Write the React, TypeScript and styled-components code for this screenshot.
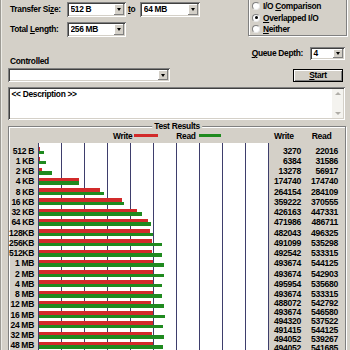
import React from "react";
import styled, { createGlobalStyle } from "styled-components";

const FONT = `"Liberation Sans", Arial, sans-serif`;

const GlobalStyle = createGlobalStyle`
  html, body { margin: 0; padding: 0; background: #d4d0c8; }
  * { box-sizing: border-box; }
`;

const Window = styled.div`
  width: 350px;
  height: 350px;
  overflow: hidden;
  background: #d4d0c8;
  box-shadow: inset 1px 0 #9c9a94, inset 2px 0 #ecebe6;
  font-family: ${FONT};
  font-weight: bold;
  font-size: 8.4px;
  letter-spacing: -0.3px;
  color: #000;
  display: flex;
  flex-direction: column;
`;

const TopArea = styled.div`
  height: 56px;
  display: flex;
  flex-shrink: 0;
`;

const LeftCol = styled.div`
  width: 248px;
  padding: 1.7px 0 0 10px;
  display: flex;
  flex-direction: column;
  gap: 5px;
`;

const FieldRow = styled.div`
  display: flex;
  align-items: center;
  height: 15px;
`;

const FieldLabel = styled.span<{ $w: number }>`
  width: ${(p) => p.$w}px;
  flex-shrink: 0;
  white-space: nowrap;
`;

const ToText = styled.span`
  margin: 0 5px 0 2px;
`;

const ComboBox = styled.div<{ $w: number; $h: number }>`
  width: ${(p) => p.$w}px;
  height: ${(p) => p.$h}px;
  flex-shrink: 0;
  background: #fff;
  display: flex;
  align-items: center;
  padding-left: 3.5px;
  box-shadow: inset 1px 1px #808080, inset -1px -1px #ffffff,
    inset 2px 2px #404040, inset -2px -2px #d4d0c8;
`;

const ComboText = styled.span`
  flex: 1;
  white-space: nowrap;
  overflow: hidden;
`;

const ComboButton = styled.div`
  width: 10px;
  height: calc(100% - 4px);
  margin-right: 2px;
  background: #d4d0c8;
  box-shadow: inset -1px -1px #808080, inset 1px 1px #ffffff;
  display: flex;
  align-items: center;
  justify-content: center;
  &::after {
    content: "";
    border-left: 2.5px solid transparent;
    border-right: 2.5px solid transparent;
    border-top: 3px solid #000;
  }
`;

const RightCol = styled.div`
  flex: 1;
  display: flex;
  flex-direction: column;
`;

const RadioGroup = styled.div`
  margin-top: -4px;
  margin-right: 3px;
  height: 40px;
  border: 1px solid #808080;
  box-shadow: inset 1px 1px #ffffff, 1px 1px #ffffff;
  padding: 3.3px 0 0 3px;
  display: flex;
  flex-direction: column;
`;

const RadioRow = styled.div`
  height: 11.8px;
  display: flex;
  align-items: center;
  gap: 3px;
  white-space: nowrap;
`;

const RadioCircle = styled.span<{ $on?: boolean }>`
  width: 8px;
  height: 8px;
  border-radius: 50%;
  background: #fff;
  border: 1px solid;
  border-color: #808080 #e8e8e8 #e8e8e8 #808080;
  display: flex;
  align-items: center;
  justify-content: center;
  &::after {
    content: "";
    width: 3px;
    height: 3px;
    border-radius: 50%;
    background: ${(p) => (p.$on ? "#000" : "transparent")};
  }
`;

const QueueRow = styled.div`
  margin-top: 10.5px;
  padding-left: 3.7px;
  display: flex;
  align-items: center;
  height: 13px;
`;

const SectionLabel = styled.div`
  height: 11px;
  line-height: 11px;
  padding-left: 10px;
  flex-shrink: 0;
`;

const ControlRow = styled.div`
  display: flex;
  align-items: center;
  justify-content: space-between;
  height: 14px;
  margin-top: 1px;
  padding: 0 7px 0 8px;
  flex-shrink: 0;
`;

const StartButton = styled.div`
  width: 50px;
  height: 13px;
  border: 1px solid #000;
  background: #d4d0c8;
  box-shadow: inset 1px 1px #ffffff, inset -1px -1px #808080;
  display: flex;
  align-items: center;
  justify-content: center;
  line-height: 10px;
`;

const DescBox = styled.div`
  margin: 5px 5px 0 8px;
  height: 33px;
  flex-shrink: 0;
  background: #fff;
  display: flex;
  box-shadow: inset 1px 1px #808080, inset -1px -1px #ffffff,
    inset 2px 2px #404040, inset -2px -2px #d4d0c8;
`;

const DescText = styled.div`
  flex: 1;
  padding: 2px 0 0 3.5px;
  line-height: 10px;
`;

const ScrollBar = styled.div`
  width: 11px;
  margin: 2px 2px 2px 0;
  background: #f4f3ef;
  display: flex;
  flex-direction: column;
  justify-content: space-between;
  align-items: center;
  padding: 3px 0;
`;

const ScrollArrow = styled.span<{ $up?: boolean }>`
  border-left: 3px solid transparent;
  border-right: 3px solid transparent;
  ${(p) =>
    p.$up ? "border-bottom: 3px solid #b0aea8;" : "border-top: 3px solid #b0aea8;"}
`;

const GroupBox = styled.div`
  margin: 5.7px 4px 0 8px;
  flex: 1;
  position: relative;
  border: 1px solid #808080;
  box-shadow: inset 1px 1px #ffffff, 1px 1px #ffffff;
`;

const GroupLegend = styled.span`
  position: absolute;
  top: -6px;
  left: 50%;
  transform: translateX(-50%);
  background: #d4d0c8;
  padding: 0 2px;
  line-height: 11px;
  white-space: nowrap;
`;

const ResultsGrid = styled.div`
  display: grid;
  grid-template-columns: 29px 231px 1fr;
  grid-template-rows: 16.6px auto;
`;

const LegendCell = styled.div`
  display: flex;
  align-items: center;
  padding: 2px 0 0 75px;
`;

const Swatch = styled.span<{ $c: string; $w: number; $ml: number }>`
  display: inline-block;
  width: ${(p) => p.$w}px;
  height: 3px;
  margin-left: ${(p) => p.$ml}px;
  background: ${(p) => p.$c};
`;

const LegendText = styled.span<{ $ml?: number }>`
  margin-left: ${(p) => p.$ml ?? 0}px;
`;

const NumHeader = styled.div`
  display: grid;
  grid-template-columns: 32px 37px;
  align-items: center;
  padding-top: 3px;
  font-size: 8.6px;
`;

const NumHeadText = styled.span<{ $pl: number }>`
  padding-left: ${(p) => p.$pl}px;
`;

const LabelsCol = styled.div`
  padding-top: 2.3px;
  display: flex;
  flex-direction: column;
`;

const RowLabel = styled.div`
  height: 10.25px;
  line-height: 10.25px;
  text-align: right;
  padding-right: 4px;
  white-space: nowrap;
  font-size: 8.5px;
  flex-shrink: 0;
`;

const ChartCol = styled.div`
  padding-top: 2.3px;
  background-color: #ffffff;
  background-image: linear-gradient(to right, #3e3e6c 1px, transparent 1px);
  background-size: 23px 100%;
  display: flex;
  flex-direction: column;
`;

const BarRow = styled.div`
  height: 10.25px;
  flex-shrink: 0;
  display: flex;
  flex-direction: column;
  justify-content: center;
  padding-left: 1px;
`;

const Bar = styled.div<{ $c: string }>`
  height: 3.5px;
  background: ${(p) => p.$c};
`;

const NumbersCol = styled.div`
  padding-top: 2.3px;
  display: flex;
  flex-direction: column;
`;

const NumRow = styled.div<{ $h: number }>`
  height: ${(p) => p.$h}px;
  line-height: ${(p) => p.$h}px;
  flex-shrink: 0;
  display: grid;
  grid-template-columns: 32px 37px;
  text-align: right;
  font-size: 8.6px;
`;

const RED = "#d22a2a";
const GREEN = "#1f8a1f";
const PX_PER_UNIT = 230 / 1000000;

const rows: [string, number, number][] = [
  ["512 B", 3270, 22016],
  ["1 KB", 6384, 31586],
  ["2 KB", 13278, 56917],
  ["4 KB", 174740, 174740],
  ["8 KB", 264154, 284109],
  ["16 KB", 359222, 370555],
  ["32 KB", 426163, 447331],
  ["64 KB", 471986, 486711],
  ["128KB", 482043, 496325],
  ["256KB", 491099, 535298],
  ["512KB", 492542, 533315],
  ["1 MB", 493674, 544125],
  ["2 MB", 493674, 542903],
  ["4 MB", 495954, 535680],
  ["8 MB", 493674, 533315],
  ["12 MB", 488072, 542792],
  ["16 MB", 493674, 546580],
  ["24 MB", 494320, 537522],
  ["32 MB", 491415, 544125],
  ["48 MB", 494052, 539267],
  ["64 MB", 494052, 541685],
];

export default function App() {
  return (
    <>
      <GlobalStyle />
      <Window>
        <TopArea>
          <LeftCol>
            <FieldRow>
              <FieldLabel $w={57}>
                Transfer Si<u>z</u>e:
              </FieldLabel>
              <ComboBox $w={59} $h={15}>
                <ComboText>512 B</ComboText>
                <ComboButton />
              </ComboBox>
              <ToText>
                <u>t</u>o
              </ToText>
              <ComboBox $w={60} $h={15}>
                <ComboText>64 MB</ComboText>
                <ComboButton />
              </ComboBox>
            </FieldRow>
            <FieldRow>
              <FieldLabel $w={57}>
                Total <u>L</u>ength:
              </FieldLabel>
              <ComboBox $w={59} $h={15}>
                <ComboText>256 MB</ComboText>
                <ComboButton />
              </ComboBox>
            </FieldRow>
          </LeftCol>
          <RightCol>
            <RadioGroup>
              <RadioRow>
                <RadioCircle />
                <span>
                  I/O <u>C</u>omparison
                </span>
              </RadioRow>
              <RadioRow>
                <RadioCircle $on />
                <span>
                  <u>O</u>verlapped I/O
                </span>
              </RadioRow>
              <RadioRow>
                <RadioCircle />
                <span>
                  <u>N</u>either
                </span>
              </RadioRow>
            </RadioGroup>
            <QueueRow>
              <FieldLabel $w={58.3}>
                <u>Q</u>ueue Depth:
              </FieldLabel>
              <ComboBox $w={35} $h={13}>
                <ComboText>4</ComboText>
                <ComboButton />
              </ComboBox>
            </QueueRow>
          </RightCol>
        </TopArea>

        <SectionLabel>Controlled</SectionLabel>
        <ControlRow>
          <ComboBox $w={162} $h={14}>
            <ComboText />
            <ComboButton />
          </ComboBox>
          <StartButton>
            <u>S</u>tart
          </StartButton>
        </ControlRow>

        <DescBox>
          <DescText>&lt;&lt; Description &gt;&gt;</DescText>
          <ScrollBar>
            <ScrollArrow $up />
            <ScrollArrow />
          </ScrollBar>
        </DescBox>

        <GroupBox>
          <GroupLegend>Test Results</GroupLegend>
          <ResultsGrid>
            <div />
            <LegendCell>
              <LegendText>Write</LegendText>
              <Swatch $c={RED} $w={24} $ml={2} />
              <LegendText $ml={18}>Read</LegendText>
              <Swatch $c={GREEN} $w={22} $ml={3} />
            </LegendCell>
            <NumHeader>
              <NumHeadText $pl={5}>Write</NumHeadText>
              <NumHeadText $pl={10.7}>Read</NumHeadText>
            </NumHeader>

            <LabelsCol>
              {rows.map(([label]) => (
                <RowLabel key={label}>{label}</RowLabel>
              ))}
            </LabelsCol>
            <ChartCol>
              {rows.map(([label, w, r]) => (
                <BarRow key={label}>
                  <Bar $c={RED} style={{ width: `${w * PX_PER_UNIT}px` }} />
                  <Bar $c={GREEN} style={{ width: `${r * PX_PER_UNIT}px` }} />
                </BarRow>
              ))}
            </ChartCol>
            <NumbersCol>
              {rows.map(([label, w, r], i) => (
                <NumRow key={label} $h={i < 15 ? 10.25 : 9}>
                  <span>{w}</span>
                  <span>{r}</span>
                </NumRow>
              ))}
            </NumbersCol>
          </ResultsGrid>
        </GroupBox>
      </Window>
    </>
  );
}
